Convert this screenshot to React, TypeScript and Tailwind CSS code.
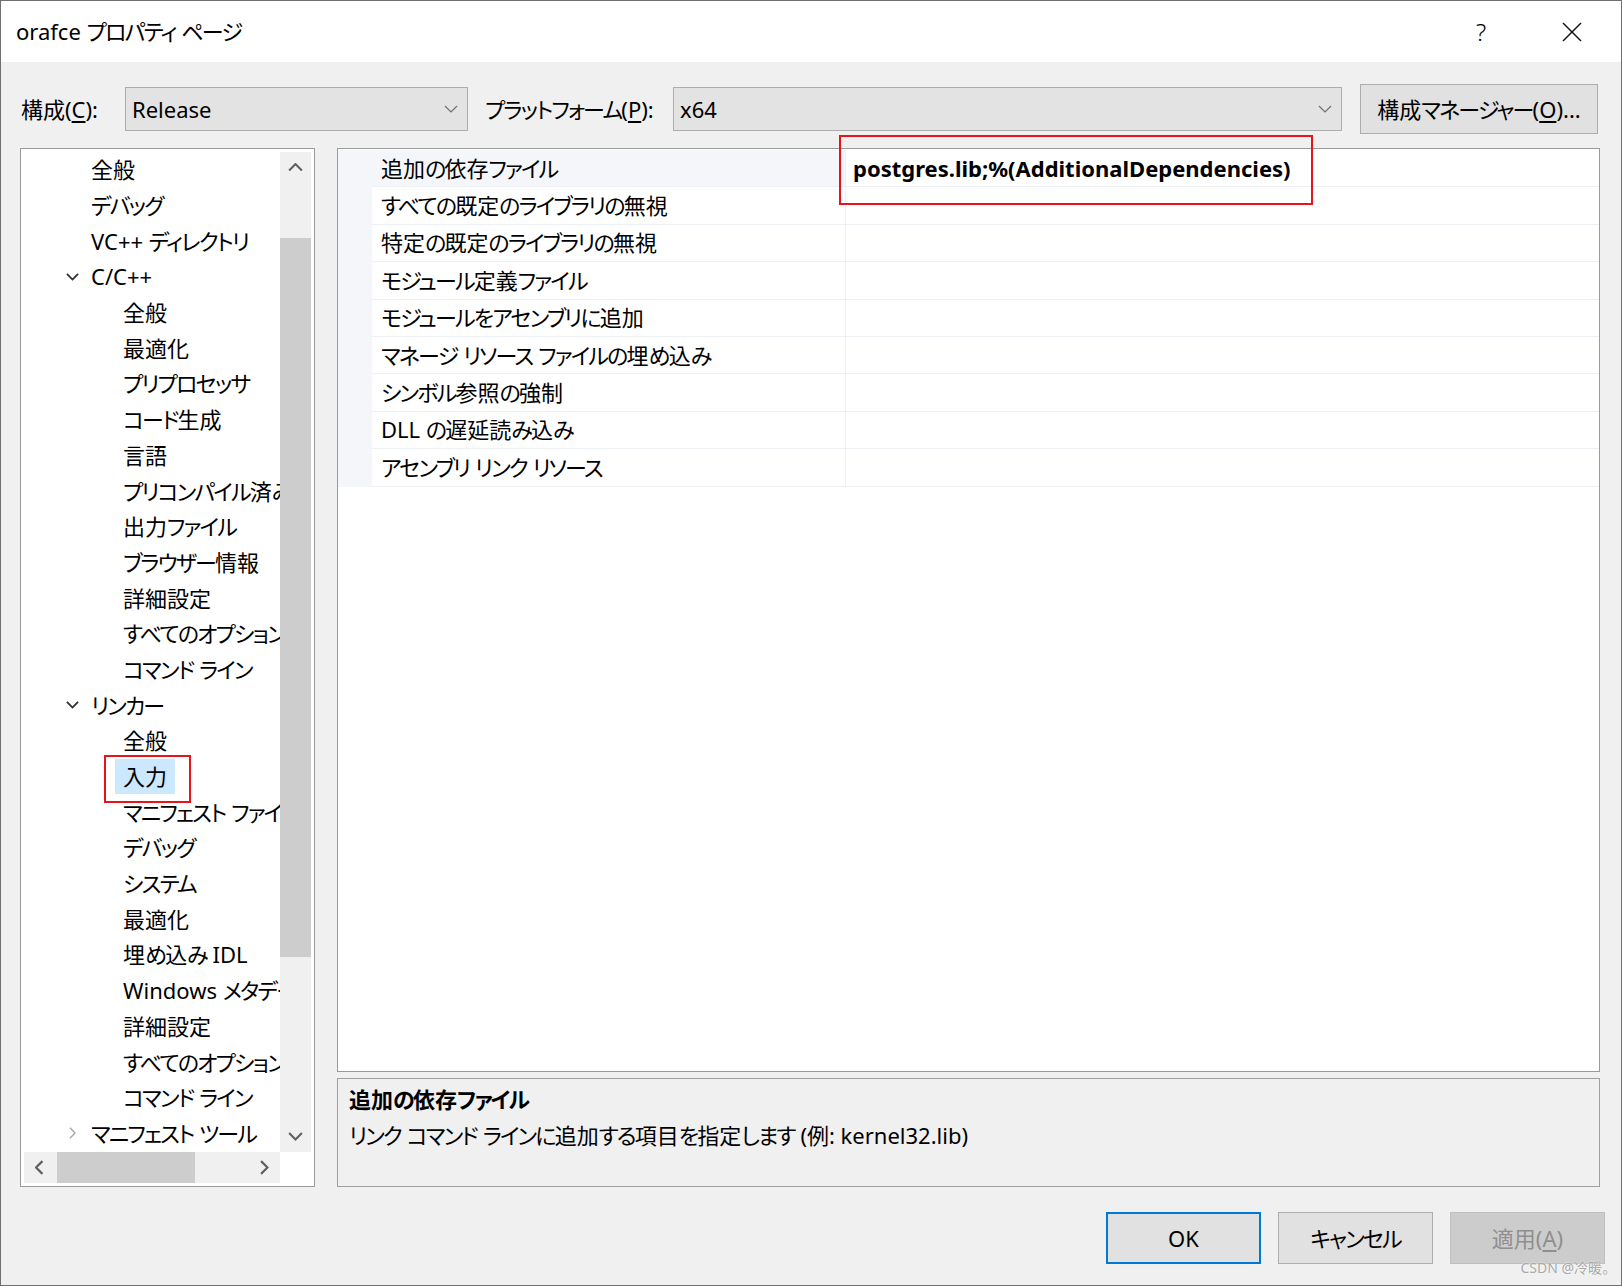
import React from 'react';

type TreeNode = {
  label: string;
  level: 1 | 2;
  expanded?: boolean;
  collapsed?: boolean;
  selected?: boolean;
};

const tree: TreeNode[] = [
  { label: '全般', level: 1 },
  { label: 'デバッグ', level: 1 },
  { label: 'VC++ ディレクトリ', level: 1 },
  { label: 'C/C++', level: 1, expanded: true },
  { label: '全般', level: 2 },
  { label: '最適化', level: 2 },
  { label: 'プリプロセッサ', level: 2 },
  { label: 'コード生成', level: 2 },
  { label: '言語', level: 2 },
  { label: 'プリコンパイル済みヘッダー', level: 2 },
  { label: '出力ファイル', level: 2 },
  { label: 'ブラウザー情報', level: 2 },
  { label: '詳細設定', level: 2 },
  { label: 'すべてのオプション', level: 2 },
  { label: 'コマンド ライン', level: 2 },
  { label: 'リンカー', level: 1, expanded: true },
  { label: '全般', level: 2 },
  { label: '入力', level: 2, selected: true },
  { label: 'マニフェスト ファイル', level: 2 },
  { label: 'デバッグ', level: 2 },
  { label: 'システム', level: 2 },
  { label: '最適化', level: 2 },
  { label: '埋め込み IDL', level: 2 },
  { label: 'Windows メタデータ', level: 2 },
  { label: '詳細設定', level: 2 },
  { label: 'すべてのオプション', level: 2 },
  { label: 'コマンド ライン', level: 2 },
  { label: 'マニフェスト ツール', level: 1, collapsed: true },
];

const props: { name: string; value?: string }[] = [
  { name: '追加の依存ファイル', value: 'postgres.lib;%(AdditionalDependencies)' },
  { name: 'すべての既定のライブラリの無視' },
  { name: '特定の既定のライブラリの無視' },
  { name: 'モジュール定義ファイル' },
  { name: 'モジュールをアセンブリに追加' },
  { name: 'マネージ リソース ファイルの埋め込み' },
  { name: 'シンボル参照の強制' },
  { name: 'DLL の遅延読み込み' },
  { name: 'アセンブリ リンク リソース' },
];

// kana in the Windows UI font are narrower than Noto's, so tighten just those runs
const Jp = ({ t }: { t: string }) => (
  <>
    {t.split(/([\u3040-\u30ff]+)/).map((s, i) =>
      /[\u3040-\u30ff]/.test(s) ? (
        <span key={i} className="tracking-[-1.8px]">
          {s}
        </span>
      ) : (
        s
      ),
    )}
  </>
);

// small chevron drawn like the Windows glyphs
const Chevron = ({ dir, color = '#606060', w = 14, stroke = 1.6 }: { dir: 'up' | 'down' | 'left' | 'right'; color?: string; w?: number; stroke?: number }) => {
  const pts: Record<string, string> = {
    down: '1,1 7,7 13,1',
    up: '1,7 7,1 13,7',
    left: '7,1 1,7 7,13',
    right: '1,1 7,7 1,13',
  };
  const vertical = dir === 'up' || dir === 'down';
  return (
    <svg width={vertical ? w : w / 2 + 1} height={vertical ? w / 2 + 1 : w} viewBox={vertical ? '0 0 14 8' : '0 0 8 14'} fill="none">
      <polyline points={pts[dir]} stroke={color} strokeWidth={stroke} />
    </svg>
  );
};

const Combo = ({ value, width }: { value: string; width: string }) => (
  <div className={`${width} h-[44px] bg-[#e3e3e3] border border-[#adadad] flex items-center pl-[6px] pr-[9px]`}>
    <span className="flex-1">{value}</span>
    <Chevron dir="down" color="#707070" w={14} stroke={1.2} />
  </div>
);

export default function App() {
  return (
    <div className="w-[1622px] h-[1286px] bg-[#f0f0f0] border border-[#6f6f6f] flex flex-col text-[22px] text-black font-['Noto_Sans','Noto_Sans_CJK_JP',sans-serif] [font-feature-settings:'palt'] relative overflow-hidden">
      {/* title bar */}
      <div className="h-[61px] bg-white flex items-center pl-[15px] shrink-0">
        <span>
          <Jp t="orafce プロパティ ページ" />
        </span>
        <div className="ml-auto flex items-center pr-[26px]">
          <span className="w-[46px] text-center text-[24px] font-light">?</span>
          <div className="w-[46px] ml-[45px] flex justify-center">
            <svg width="20" height="20" viewBox="0 0 20 20">
              <line x1="1" y1="1" x2="19" y2="19" stroke="#111" strokeWidth="1.4" />
              <line x1="19" y1="1" x2="1" y2="19" stroke="#111" strokeWidth="1.4" />
            </svg>
          </div>
        </div>
      </div>

      {/* configuration row */}
      <div className="mt-[22px] h-[50px] flex items-center pl-[20px] shrink-0">
        <span className="w-[104px]">
          構成(<span className="underline underline-offset-[3px]">C</span>):
        </span>
        <Combo value="Release" width="w-[343px]" />
        <span className="ml-[17px] w-[188px]">
          <Jp t="プラットフォーム" />(<span className="underline underline-offset-[3px]">P</span>):
        </span>
        <Combo value="x64" width="w-[669px]" />
        <button className="ml-[18px] w-[238px] h-[50px] bg-[#e1e1e1] border border-[#adadad]">
          構成<Jp t="マネージャー" />(<span className="underline underline-offset-[3px]">O</span>)...
        </button>
      </div>

      {/* main area */}
      <div className="mt-[14px] flex pl-[19px] shrink-0">
        {/* tree */}
        <div className="relative w-[295px] h-[1039px] border border-[#9a9a9a] bg-white p-[3px] flex flex-col">
          <div className="flex h-[1000px]">
            <div className="w-[256px] overflow-hidden whitespace-nowrap">
              {tree.map((n, i) => (
                <div key={i} className="h-[35.7px] flex items-center">
                  {n.level === 1 ? (
                    <>
                      <div className="w-[67px] shrink-0 flex justify-end pr-[12px]">
                        {n.expanded && <Chevron dir="down" color="#303030" w={13} stroke={2} />}
                        {n.collapsed && (
                          <div className="mr-[3px]">
                            <Chevron dir="right" color="#a6a6a6" w={12} stroke={1.6} />
                          </div>
                        )}
                      </div>
                      <span>
                        <Jp t={n.label} />
                      </span>
                    </>
                  ) : n.selected ? (
                    <span className="ml-[91px] h-full flex items-center px-[8px] bg-[#cce8ff]">{n.label}</span>
                  ) : (
                    <span className="ml-[99px]">
                      <Jp t={n.label} />
                    </span>
                  )}
                </div>
              ))}
            </div>
            {/* vertical scrollbar */}
            <div className="w-[31px] bg-[#f0f0f0] flex flex-col">
              <div className="h-[31px] flex items-center justify-center">
                <Chevron dir="up" color="#606060" w={15} stroke={2} />
              </div>
              <div className="mt-[55px] h-[719px] bg-[#cdcdcd]" />
              <div className="flex-1" />
              <div className="h-[31px] flex items-center justify-center">
                <Chevron dir="down" color="#606060" w={15} stroke={2} />
              </div>
            </div>
          </div>
          {/* horizontal scrollbar */}
          <div className="flex h-[31px]">
            <div className="w-[256px] bg-[#f0f0f0] flex items-center">
              <div className="w-[31px] flex justify-center">
                <Chevron dir="left" color="#606060" w={15} stroke={2} />
              </div>
              <div className="ml-[2px] w-[138px] h-full bg-[#cdcdcd]" />
              <div className="flex-1" />
              <div className="w-[31px] flex justify-center">
                <Chevron dir="right" color="#606060" w={15} stroke={2} />
              </div>
            </div>
            <div className="w-[31px] bg-white" />
          </div>
          {/* annotation */}
          <div className="absolute left-[83px] top-[606px] w-[87px] h-[48px] border-2 border-[#e8141c]" />
        </div>

        {/* right column */}
        <div className="ml-[22px] w-[1263px] flex flex-col relative">
          <div className="h-[924px] border border-[#9a9a9a] bg-white pt-[1px]">
            {props.map((p, i) => (
              <div key={i} className="flex h-[37.4px]">
                <div className="w-[34px] bg-[#f4f6fa]" />
                <div className={`w-[474px] flex items-center pl-[9px] border-b border-r border-[#edf0f5] ${i === 0 ? 'bg-[#f4f6fa]' : 'bg-white'}`}>
                  <span>
                    <Jp t={p.name} />
                  </span>
                </div>
                <div className="flex-1 flex items-center pl-[7px] border-b border-[#edf0f5] font-bold">{p.value}</div>
              </div>
            ))}
          </div>
          <div className="mt-[6px] h-[109px] border border-[#a0a0a0] bg-[#f0f0f0] pl-[11px] pt-[2px] leading-[36px]">
            <div className="font-bold">
              <Jp t="追加の依存ファイル" />
            </div>
            <div>
              <Jp t="リンク コマンド ラインに追加する項目を指定します (例: kernel32.lib)" />
            </div>
          </div>
          {/* annotation */}
          <div className="absolute left-[502px] top-[-13px] w-[474px] h-[70px] border-2 border-[#e8141c]" />
        </div>
      </div>

      {/* buttons */}
      <div className="mt-[25px] flex justify-end pr-[16px] gap-[17px]">
        <button className="w-[155px] h-[52px] bg-[#e1e1e1] border-2 border-[#0078d7]">OK</button>
        <button className="w-[155px] h-[52px] bg-[#e1e1e1] border border-[#adadad]">
          <Jp t="キャンセル" />
        </button>
        <button className="w-[155px] h-[52px] bg-[#cccccc] border border-[#bfbfbf] text-[#8f8f8f]">
          適用(<span className="underline underline-offset-[3px]">A</span>)
        </button>
      </div>

      {/* watermark */}
      <span className="absolute right-[12px] bottom-[7px] text-[14px] text-[#a8a8a8] font-['Noto_Sans','Noto_Sans_CJK_SC',sans-serif] [text-shadow:0_0_2px_#fff]">
        CSDN @冷暖。
      </span>
    </div>
  );
}
